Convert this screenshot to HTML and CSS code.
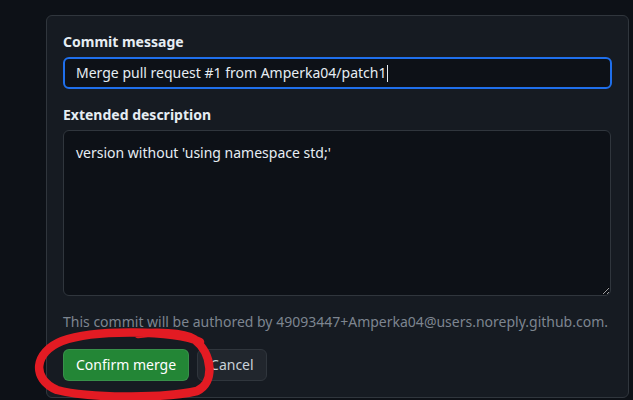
FILE: index.html
```html
<!DOCTYPE html>
<html lang="en">
<head>
<meta charset="utf-8">
<link rel="stylesheet" href="styles.css">
</head>
<body>
<div class="card">
  <label class="label" for="msg">Commit message</label>
  <div class="input" id="msg">Merge pull request #1 from Amperka04/patch1<span class="caret"></span></div>
  <label class="label label-gap" for="desc">Extended description</label>
  <textarea class="textarea" id="desc">version without 'using namespace std;'</textarea>
  <p class="note">This commit will be authored by 49093447+Amperka04@users.noreply.github.com.</p>
  <div class="actions">
    <button class="btn btn-primary">Confirm merge</button>
    <button class="btn btn-default">Cancel</button>
  </div>
</div>
<svg class="scribble" width="633" height="400" viewBox="0 0 633 400">
  <path d="M 200 342 C 176 330, 94 329, 62 341 C 34 352, 31 379, 57 390 C 88 398, 162 399, 197 391 C 215 383, 213 354, 194 339 C 183 332, 154 332, 138 334" fill="none" stroke="#e31b23" stroke-width="8.5" stroke-linecap="round"/>
</svg>
</body>
</html>
```
FILE: styles.css
```css
html, body {
  margin: 0;
  padding: 0;
  background: #0d1117;
  width: 633px;
  height: 400px;
  overflow: hidden;
  font-family: "Noto Sans", "DejaVu Sans", sans-serif;
  font-size: 14px;
  color: #e6edf3;
}
.card {
  box-sizing: border-box;
  margin: 15px 0 0 46px;
  width: 583px;
  height: 383px;
  background: #161b22;
  border: 1px solid #30363d;
  border-radius: 6px;
  padding: 16px 16px 16px 16px;
  display: flex;
  flex-direction: column;
}
.label {
  display: block;
  font-weight: 700;
  font-size: 14px;
  line-height: 20px;
  margin-bottom: 5px;
}
.label-gap {
  margin-top: 16px;
}
.input {
  box-sizing: border-box;
  height: 32px;
  width: 549px;
  border: 2px solid #1f6feb;
  border-radius: 6px;
  background: #0d1117;
  padding: 0 11px;
  line-height: 28px;
  display: flex;
  align-items: center;
  white-space: nowrap;
}
.caret {
  display: inline-block;
  width: 1px;
  height: 17px;
  background: #e6edf3;
  margin-left: 1px;
}
.textarea {
  box-sizing: border-box;
  display: block;
  width: 548px;
  height: 166px;
  border: 1px solid #30363d;
  border-radius: 6px;
  background: #0d1117;
  color: #e6edf3;
  font: inherit;
  line-height: 20px;
  padding: 12px 12px;
  resize: vertical;
  outline: none;
  margin: 0;
}
.note {
  margin: 16px 0 0;
  line-height: 20px;
  color: #7d8590;
}
.actions {
  display: flex;
  gap: 8px;
  margin-top: 17px;
}
.btn {
  box-sizing: border-box;
  height: 32px;
  padding: 0 12px;
  border-radius: 6px;
  border: 1px solid rgba(240, 246, 252, 0.1);
  font-family: inherit;
  font-size: 14px;
  font-weight: 400;
  line-height: 20px;
  cursor: pointer;
}
.btn-primary {
  background: #238636;
  color: #ffffff;
}
.btn-default {
  background: #21262d;
  color: #c9d1d9;
  border-color: #30363d;
}
.scribble {
  position: absolute;
  left: 0;
  top: 0;
  pointer-events: none;
}
```
